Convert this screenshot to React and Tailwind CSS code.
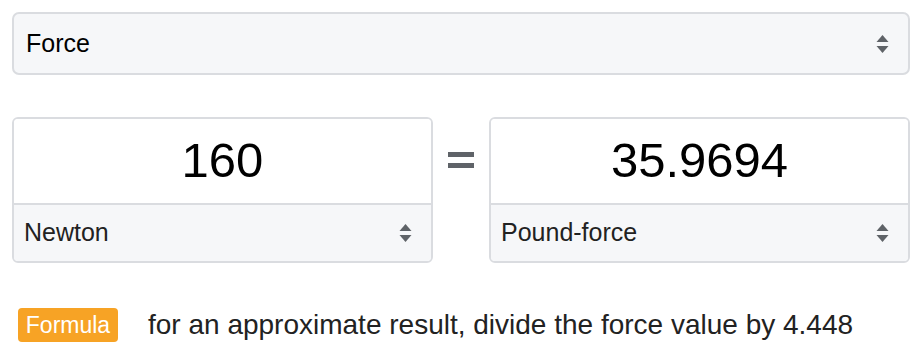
import React from 'react';

const Arrows = () => (
  <svg width="13" height="22" viewBox="0 0 13 22" className="shrink-0">
    <path d="M0.5 9 L6.5 2 L12.5 9 Z" fill="#5f6368" />
    <path d="M0.5 13 L12.5 13 L6.5 20 Z" fill="#5f6368" />
  </svg>
);

const UnitBox = ({ value, unit }) => (
  <div className="flex flex-col rounded-[6px] border-2 border-[#dadce0] overflow-hidden">
    <div className="h-[84px] flex items-center justify-center bg-white text-[49px] text-black">
      {value}
    </div>
    <div className="h-[58px] border-t-2 border-[#dadce0] bg-[#f6f7f9] flex items-center justify-between pl-[10px] pr-[19px] text-[25px] text-[#222]">
      <span>{unit}</span>
      <Arrows />
    </div>
  </div>
);

export default function App() {
  return (
    <div className="p-3 bg-white font-['Liberation_Sans',Arial,sans-serif]">
      {/* category select */}
      <div className="h-[63px] rounded-[7px] border-2 border-[#dadce0] bg-[#f6f7f9] flex items-center justify-between pl-[12px] pr-[19px] text-[25px] text-black">
        <span>Force</span>
        <Arrows />
      </div>

      <div className="mt-[42px] grid grid-cols-[1fr_56px_1fr]">
        <UnitBox value="160" unit="Newton" />
        <div className="h-[86px] flex flex-col items-center justify-center gap-[6px]">
          <div className="w-[26px] h-[5px] bg-[#5f6368]" />
          <div className="w-[26px] h-[5px] bg-[#5f6368]" />
        </div>
        <UnitBox value="35.9694" unit="Pound-force" />
      </div>

      <div className="mt-[41px] flex items-center">
        <span className="ml-[6px] w-[100px] h-[34px] rounded-[4px] bg-[#f7a325] text-white text-[23px] flex items-center justify-center">
          Formula
        </span>
        <span className="ml-[30px] text-[28px] text-[#222]">
          for an approximate result, divide the force value by 4.448
        </span>
      </div>
    </div>
  );
}
